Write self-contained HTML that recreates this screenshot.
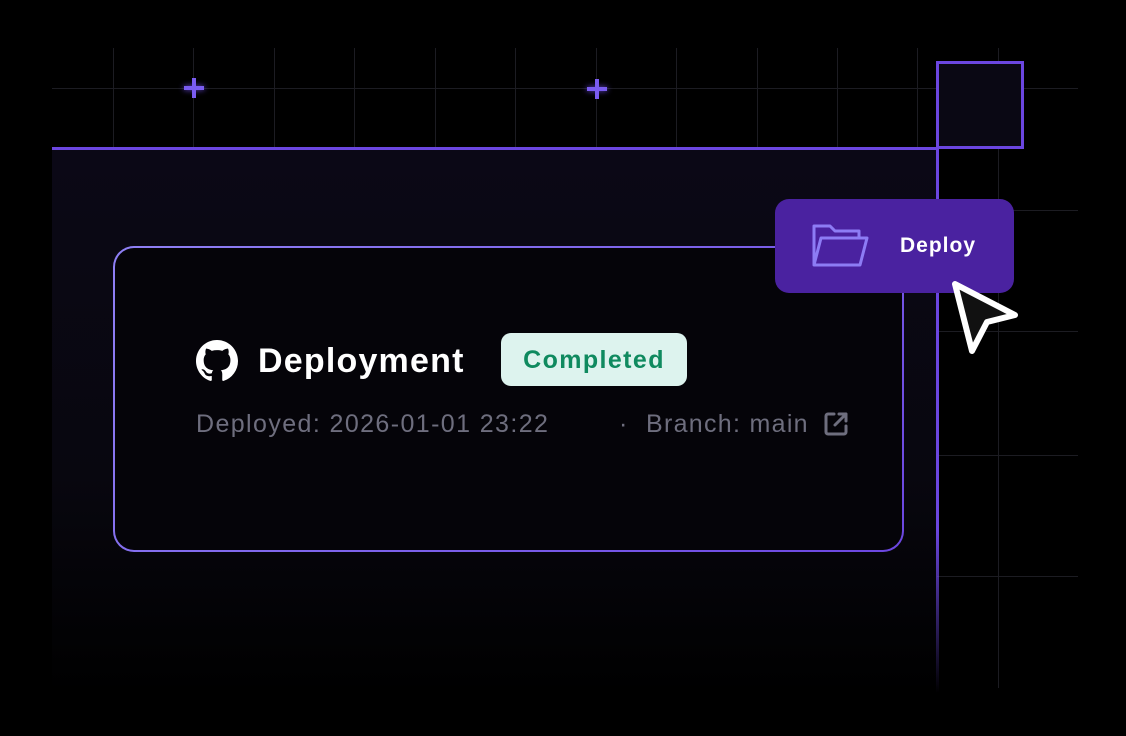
<!DOCTYPE html>
<html><head><meta charset="utf-8"><style>
body{margin:0;width:1126px;height:736px;background:#000;overflow:hidden;position:relative;font-family:"Liberation Sans",sans-serif}
.a{position:absolute}
.v{position:absolute;width:1px;background:#1c1c22}
.h{position:absolute;height:1px;background:#1c1c22}
</style></head><body>
<div class="h" style="left:52px;top:88px;width:1026px"></div>
<div class="v" style="left:113px;top:48px;height:100px"></div>
<div class="v" style="left:193px;top:48px;height:100px"></div>
<div class="v" style="left:274px;top:48px;height:100px"></div>
<div class="v" style="left:354px;top:48px;height:100px"></div>
<div class="v" style="left:435px;top:48px;height:100px"></div>
<div class="v" style="left:515px;top:48px;height:100px"></div>
<div class="v" style="left:596px;top:48px;height:100px"></div>
<div class="v" style="left:676px;top:48px;height:100px"></div>
<div class="v" style="left:757px;top:48px;height:100px"></div>
<div class="v" style="left:837px;top:48px;height:100px"></div>
<div class="v" style="left:917px;top:48px;height:100px"></div>
<div class="v" style="left:998px;top:48px;height:640px"></div>
<div class="h" style="left:937px;top:210px;width:141px"></div>
<div class="h" style="left:937px;top:331px;width:141px"></div>
<div class="h" style="left:937px;top:455px;width:141px"></div>
<div class="h" style="left:937px;top:576px;width:141px"></div>
<div class="a" style="left:184px;top:86px;width:20px;height:4px;background:#7a5cf0;box-shadow:0 0 6px #6a4ae0"></div>
<div class="a" style="left:192px;top:78px;width:4px;height:20px;background:#7a5cf0"></div>
<div class="a" style="left:587px;top:87px;width:20px;height:4px;background:#7a5cf0;box-shadow:0 0 6px #6a4ae0"></div>
<div class="a" style="left:595px;top:79px;width:4px;height:20px;background:#7a5cf0"></div>
<div class="a" style="left:52px;top:147px;width:885px;height:545px;background:linear-gradient(#0b0816 0%,#08070f 60%,#000 100%);border-top:3px solid #6b46e0"></div>
<div class="a" style="left:936px;top:148px;width:3px;height:545px;background:linear-gradient(#6b46e0 70%,rgba(107,70,224,0))"></div>
<div class="a" style="left:936px;top:61px;width:82px;height:82px;border:3px solid #6b46e0;background:#0a0814"></div>
<div class="a" style="left:113px;top:246px;width:791px;height:306px;border-radius:21px;background:linear-gradient(135deg,#8f80f5,#6b46e0)"></div>
<div class="a" style="left:115px;top:248px;width:787px;height:302px;border-radius:19px;background:#050409"></div>
<svg class="a" style="left:196px;top:340px" width="42" height="42" viewBox="0 0 16 16"><path fill="#fff" d="M8 0C3.58 0 0 3.58 0 8c0 3.540 2.29 6.53 5.47 7.59.4.07.55-.17.55-.38 0-.19-.01-.82-.01-1.49-2.01.37-2.530-.49-2.69-.94-.09-.23-.48-.94-.82-1.130-.28-.15-.68-.52-.01-.53.63-.01 1.08.58 1.23.82.72 1.21 1.87.87 2.33.66.07-.52.28-.87.51-1.07-1.78-.2-3.64-.89-3.64-3.950 0-.87.31-1.59.82-2.15-.08-.2-.36-1.02.08-2.12 0 0 .67-.21 2.2.82.64-.18 1.32-.27 2-.27.68 0 1.36.09 2 .27 1.53-1.04 2.2-.82 2.2-.82.44 1.1.16 1.92.08 2.12.51.56.82 1.27.82 2.15 0 3.07-1.87 3.75-3.65 3.95.29.25.54.73.54 1.48 0 1.07-.01 1.93-.01 2.2 0 .21.15.46.55.38A8.013 8.013 0 0016 8c0-4.42-3.58-8-8-8z"/></svg>
<div class="a" style="left:258px;top:339px;color:#fff;font-weight:bold;font-size:34px;line-height:44px;letter-spacing:1.2px">Deployment</div>
<div class="a" style="left:501px;top:333px;width:186px;height:53px;border-radius:10px;background:#ddf3ee;color:#0f8a5f;font-weight:bold;font-size:25px;line-height:55px;text-align:center;letter-spacing:1.4px">Completed</div>
<div class="a" style="left:196px;top:409px;color:#6e6e7e;font-size:25px;line-height:30px;letter-spacing:1.4px">Deployed: 2026-01-01 23:22</div>
<div class="a" style="left:619px;top:409px;color:#6e6e7e;font-size:25px;line-height:30px">·</div>
<div class="a" style="left:646px;top:409px;color:#6e6e7e;font-size:25px;line-height:30px;letter-spacing:1.3px">Branch: main</div>
<svg class="a" style="left:823px;top:411px" width="26" height="26" viewBox="0 0 26 26" fill="none" stroke="#6e6e7e" stroke-width="3" stroke-linecap="round" stroke-linejoin="round"><path d="M11 3H5a2 2 0 0 0-2 2v16a2 2 0 0 0 2 2h16a2 2 0 0 0 2-2v-6"/><path d="M16 3h7v7M23 3 12 14"/></svg>
<div class="a" style="left:775px;top:199px;width:239px;height:94px;border-radius:14px;background:#4a22a0"></div>
<svg class="a" style="left:810px;top:222px" width="60" height="46" viewBox="0 0 60 46" fill="none" stroke="#8d7cf5" stroke-width="3" stroke-linejoin="round"><path d="M4 43V4h16l5 5h24v7"/><path d="M4 43l7-27h46l-7 27z"/></svg>
<div class="a" style="left:900px;top:233px;color:#fff;font-weight:bold;font-size:21px;line-height:26px;letter-spacing:1px">Deploy</div>
<svg class="a" style="left:945px;top:276px" width="80" height="84" viewBox="0 0 80 84"><path d="M10 8 L70 39 L42 46 L27 75 Z" fill="#111" stroke="#fff" stroke-width="6" stroke-linejoin="round"/></svg>
</body></html>
